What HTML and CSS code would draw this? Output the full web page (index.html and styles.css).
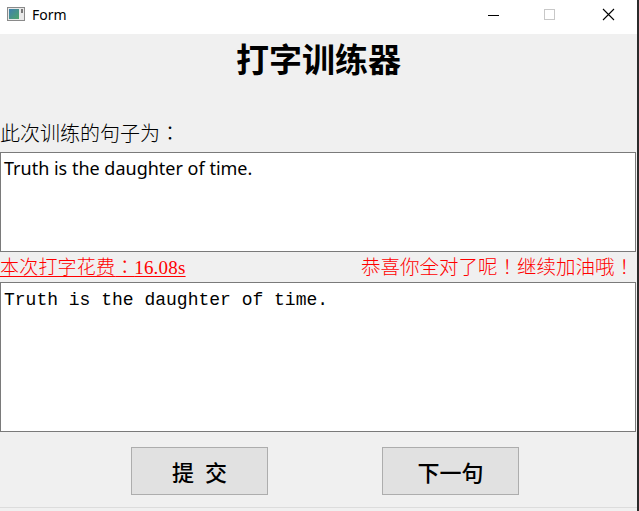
FILE: index.html
```html
<!DOCTYPE html>
<html lang="zh">
<head>
<meta charset="utf-8">
<title>Form</title>
<link rel="stylesheet" href="styles.css">
</head>
<body>
<div class="window">
  <div class="titlebar">
    <svg class="app-icon" width="18" height="14" viewBox="0 0 18 14">
      <rect x="0.5" y="0.5" width="17" height="13" fill="#e8e8e8" stroke="#8a8a8a"/>
      <defs><linearGradient id="g" x1="0" y1="0" x2="1" y2="1"><stop offset="0" stop-color="#3f7fb0"/><stop offset="1" stop-color="#4ea56a"/></linearGradient></defs>
      <rect x="2" y="2" width="10" height="10" fill="url(#g)"/>
      <rect x="14" y="2" width="2" height="4" fill="#777"/>
    </svg>
    <span class="title">Form</span>
    <div class="controls">
      <svg class="ctl" width="46" height="34" viewBox="0 0 46 34"><line x1="18" y1="15.5" x2="29" y2="15.5" stroke="#000" stroke-width="1"/></svg>
      <svg class="ctl" width="46" height="34" viewBox="0 0 46 34"><rect x="17.5" y="9.5" width="10" height="10" fill="none" stroke="#c8c8c8"/></svg>
      <svg class="ctl" width="46" height="34" viewBox="0 0 46 34"><path d="M17 9 L28 20 M28 9 L17 20" stroke="#000" stroke-width="1.1"/></svg>
    </div>
  </div>
  <div class="content">
    <h1 class="heading">打字训练器</h1>
    <div class="label">此次训练的句子为<span class="punct">：</span></div>
    <div class="box box-sentence">Truth is the daughter of time.</div>
    <div class="status">
      <span class="time">本次打字花费<span class="punct">：</span>16.08s</span>
      <span class="result">恭喜你全对了呢<span class="punct">！</span>继续加油哦<span class="punct">！</span></span>
    </div>
    <div class="box box-input">Truth is the daughter of time.</div>
    <div class="actions">
      <button class="btn">提&ensp;交</button>
      <button class="btn">下一句</button>
    </div>
  </div>
</div>
</body>
</html>
```

FILE: styles.css
```css
html, body {
  margin: 0;
  padding: 0;
  width: 639px;
  height: 511px;
  overflow: hidden;
  background: #f0f0f0;
}
.window {
  width: 637px;
  height: 511px;
  border-right: 2px solid #2b2b2b;
  background: #f0f0f0;
  display: flex;
  flex-direction: column;
}
.titlebar {
  height: 34px;
  background: #fff;
  display: flex;
  align-items: flex-start;
  flex: none;
}
.app-icon {
  margin: 7px 0 0 7px;
}
.title {
  font-family: "Noto Sans", "Liberation Sans", sans-serif;
  font-size: 14px;
  line-height: 16px;
  margin: 7px 0 0 7px;
  color: #000;
}
.controls {
  margin-left: auto;
  margin-right: 5px;
  display: flex;
}
.ctl {
  display: block;
  width: 46px;
  height: 34px;
}
.ctl:nth-child(1) { margin-right: 11px; }
.ctl:nth-child(2) { margin-right: 13px; }
.content {
  flex: 1;
  display: flex;
  flex-direction: column;
  font-family: "Noto Sans CJK SC", sans-serif;
}
.punct {
  display: inline-block;
  width: 1em;
  text-align: center;
  font-family: "Noto Sans CJK JP", "Noto Sans CJK TC", sans-serif;
}
.heading {
  margin: 0;
  height: 52px;
  padding-top: 4px;
  box-sizing: border-box;
  text-align: center;
  font-size: 33px;
  line-height: 40px;
  font-weight: 700;
  color: #000;
}
.label {
  height: 66px;
  padding-top: 35px;
  box-sizing: border-box;
  font-size: 20px;
  line-height: 24px;
  font-weight: 300;
  color: #000;
}
.box {
  background: #fff;
  border: 1px solid #7a7a7a;
  box-sizing: border-box;
  margin-right: 1px;
  color: #000;
}
.box-sentence {
  height: 100px;
  padding: 4px 0 0 3px;
  font-family: "Noto Sans", "Noto Sans CJK SC", sans-serif;
  font-size: 18px;
  line-height: 22px;
}
.status {
  height: 30px;
  box-sizing: border-box;
  padding: 0 3px 3px 0;
  display: flex;
  justify-content: space-between;
  align-items: center;
  font-family: "Liberation Serif", "Noto Sans CJK SC", serif;
  color: #ff0000;
}
.time {
  text-decoration: underline;
  text-underline-offset: 2px;
  font-size: 19px;
  letter-spacing: 0.2px;
  font-weight: 300;
}
.time .punct {
  text-decoration: underline;
  text-underline-offset: 2px;
}
.result {
  font-size: 19.5px;
  font-weight: 300;
}
.box-input {
  height: 150px;
  padding: 6px 0 0 3px;
  font-family: "Liberation Mono", "Noto Sans CJK SC", monospace;
  font-size: 18px;
  line-height: 22px;
}
.actions {
  flex: 1;
  display: flex;
  align-items: flex-start;
  padding: 15px 0 0 131px;
  gap: 114px;
  border-bottom: 1px solid #dcdcdc;
  margin-bottom: 3px;
}
.btn {
  width: 137px;
  height: 48px;
  background: #e1e1e1;
  border: 1px solid #adadad;
  font-family: "Noto Sans CJK SC", sans-serif;
  font-size: 22px;
  font-weight: 500;
  color: #000;
  padding: 0;
  margin: 0;
}
```
